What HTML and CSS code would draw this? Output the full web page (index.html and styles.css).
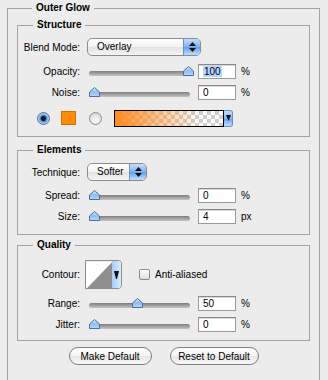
FILE: index.html
```html
<!DOCTYPE html>
<html lang="en">
<head>
  <meta charset="UTF-8" />
  <title>Outer Glow</title>
  <link rel="stylesheet" href="styles.css">
</head>
<body>
  <div class="box outer">
    <div class="title">Outer Glow</div>

    <div class="box structure">
      <div class="title">Structure</div>
      <div class="row first">
        <span class="lbl">Blend Mode:</span>
        <div class="popup blend">
          <span class="popup-text">Overlay</span>
          <span class="stepper"><svg width="7" height="10" viewBox="0 0 7 10"><path d="M3.5 0 L7 4 H0 Z M0 6 H7 L3.5 10 Z" fill="#111"/></svg></span>
        </div>
      </div>
      <div class="row gap8">
        <span class="lbl">Opacity:</span>
        <div class="slider"><div class="track"></div><svg class="knob" style="left:94px" width="11" height="10" viewBox="0 0 11 10"><path d="M0.5 5 L5.5 0.5 L10.5 5 V9.5 H0.5 Z" fill="url(#kg)" stroke="#4a6f9e"/></svg></div>
        <div class="num"><span class="sel">100</span></div>
        <span class="unit">%</span>
      </div>
      <div class="row">
        <span class="lbl">Noise:</span>
        <div class="slider"><div class="track"></div><svg class="knob" style="left:0px" width="11" height="10" viewBox="0 0 11 10"><path d="M0.5 5 L5.5 0.5 L10.5 5 V9.5 H0.5 Z" fill="url(#kg)" stroke="#4a6f9e"/></svg></div>
        <div class="num">0</div>
        <span class="unit">%</span>
      </div>
      <div class="colors">
        <span class="radio on"></span>
        <span class="chip"></span>
        <span class="radio off"></span>
        <div class="gradient">
          <div class="ramp"></div>
          <span class="drop"><svg width="5" height="6" viewBox="0 0 5 6"><path d="M0 0 H5 L2.5 6 Z" fill="#111"/></svg></span>
        </div>
      </div>
    </div>

    <div class="box elements">
      <div class="title">Elements</div>
      <div class="row first">
        <span class="lbl">Technique:</span>
        <div class="popup technique">
          <span class="popup-text">Softer</span>
          <span class="stepper"><svg width="7" height="10" viewBox="0 0 7 10"><path d="M3.5 0 L7 4 H0 Z M0 6 H7 L3.5 10 Z" fill="#111"/></svg></span>
        </div>
      </div>
      <div class="row gap7">
        <span class="lbl">Spread:</span>
        <div class="slider"><div class="track"></div><svg class="knob" style="left:0px" width="11" height="10" viewBox="0 0 11 10"><path d="M0.5 5 L5.5 0.5 L10.5 5 V9.5 H0.5 Z" fill="url(#kg)" stroke="#4a6f9e"/></svg></div>
        <div class="num">0</div>
        <span class="unit">%</span>
      </div>
      <div class="row">
        <span class="lbl">Size:</span>
        <div class="slider"><div class="track"></div><svg class="knob" style="left:0px" width="11" height="10" viewBox="0 0 11 10"><path d="M0.5 5 L5.5 0.5 L10.5 5 V9.5 H0.5 Z" fill="url(#kg)" stroke="#4a6f9e"/></svg></div>
        <div class="num">4</div>
        <span class="unit">px</span>
      </div>
    </div>

    <div class="box quality">
      <div class="title">Quality</div>
      <div class="row first contour-row">
        <span class="lbl">Contour:</span>
        <div class="contour">
          <svg width="28" height="29" viewBox="0 0 28 29"><rect width="28" height="29" fill="#fff"/><path d="M0 29 L28 0 V29 Z" fill="#8f8f8f"/></svg>
          <span class="cdrop"><svg width="5" height="8" viewBox="0 0 5 8"><path d="M0 0 H5 L3 8 H2 Z" fill="#111"/></svg></span>
        </div>
        <span class="check"></span>
        <span class="check-text">Anti-aliased</span>
      </div>
      <div class="row gap7">
        <span class="lbl">Range:</span>
        <div class="slider"><div class="track"></div><svg class="knob" style="left:43px" width="11" height="10" viewBox="0 0 11 10"><path d="M0.5 5 L5.5 0.5 L10.5 5 V9.5 H0.5 Z" fill="url(#kg)" stroke="#4a6f9e"/></svg></div>
        <div class="num">50</div>
        <span class="unit">%</span>
      </div>
      <div class="row">
        <span class="lbl">Jitter:</span>
        <div class="slider"><div class="track"></div><svg class="knob" style="left:0px" width="11" height="10" viewBox="0 0 11 10"><path d="M0.5 5 L5.5 0.5 L10.5 5 V9.5 H0.5 Z" fill="url(#kg)" stroke="#4a6f9e"/></svg></div>
        <div class="num">0</div>
        <span class="unit">%</span>
      </div>
    </div>

    <div class="buttons">
      <button class="make">Make Default</button>
      <button class="reset">Reset to Default</button>
    </div>
  </div>

  <svg width="0" height="0" class="defs">
    <defs>
      <linearGradient id="kg" x1="0" y1="0" x2="0" y2="1">
        <stop offset="0" stop-color="#dbeaff"/>
        <stop offset="0.5" stop-color="#8fbcf0"/>
        <stop offset="1" stop-color="#b9d8ff"/>
      </linearGradient>
    </defs>
  </svg>
</body>
</html>
```

FILE: styles.css
```css
* {
  box-sizing: border-box;
}
html, body {
  margin: 0;
  overflow: hidden;
}
body {
  background: #ececec;
  font-family: 'Liberation Sans', Arial, sans-serif;
  font-size: 10px;
  color: #000;
  width: 328px;
  height: 380px;
}
.defs {
  position: absolute;
}
.box {
  border: 1px solid #a3a3a3;
}
.title {
  width: max-content;
  margin: -8px 0 0 15px;
  padding: 0 4px;
  background: #ececec;
  font-weight: bold;
  font-size: 10px;
  line-height: 14px;
}
.outer {
  margin: 8px 0 0 7px;
  width: 313px;
  padding: 0 9px 40px 9px;
}
.structure {
  margin-top: 10px;
  padding-bottom: 10px;
}
.elements {
  margin-top: 13px;
  padding-bottom: 10px;
}
.quality {
  margin-top: 10px;
  padding-bottom: 8px;
}
.row {
  display: flex;
  align-items: center;
  height: 15px;
  margin-top: 6px;
}
.row.first {
  height: 18px;
}
.row.gap8 {
  margin-top: 8px;
}
.row.gap7 {
  margin-top: 7px;
}
.quality .row.first {
  margin-top: 8px;
}
.lbl {
  width: 62px;
  text-align: right;
  margin-right: 7px;
  flex: none;
}
.popup {
  display: flex;
  height: 18px;
  border: 1px solid #8c8c8c;
  border-radius: 5px;
  background: linear-gradient(#ffffff, #f1f1f1 50%, #e2e2e2 51%, #f4f4f4);
  overflow: hidden;
}
.popup.blend {
  width: 114px;
}
.popup.technique {
  width: 60px;
}
.popup-text {
  flex: 1;
  padding-left: 9px;
  line-height: 16px;
}
.stepper {
  width: 17px;
  display: flex;
  align-items: center;
  justify-content: center;
  border-left: 1px solid #6f8fba;
  background: linear-gradient(#c4def9, #7fb2ee 50%, #5e9ded 51%, #bfe1ff);
}
.slider {
  position: relative;
  width: 101px;
  height: 15px;
  margin-left: 2px;
  margin-right: 8px;
  flex: none;
}
.track {
  position: absolute;
  left: 0;
  right: 0;
  top: 7px;
  height: 5px;
  border-radius: 3px;
  background: linear-gradient(#7d7d7d, #a9a9a9 60%, #c2c2c2);
}
.knob {
  position: absolute;
  top: 2px;
}
.num {
  width: 38px;
  height: 15px;
  border: 1px solid #999;
  border-top-color: #888;
  background: #fff;
  padding-left: 4px;
  line-height: 13px;
  box-shadow: inset 0 1px 0 #d8d8d8;
}
.sel {
  background: #b5d5ff;
  padding: 0 1px;
}
.unit {
  margin-left: 5px;
}
.colors {
  display: flex;
  align-items: center;
  height: 16px;
  margin-top: 10px;
  padding-left: 19px;
}
.radio {
  width: 13px;
  height: 13px;
  border-radius: 50%;
  border: 1px solid #8a8a8a;
  background: radial-gradient(circle at 50% 70%, #ffffff, #dcdcdc 70%, #bcbcbc);
  flex: none;
}
.radio.on {
  border-color: #4f73a6;
  background: radial-gradient(circle, #111 0 2px, #2d5b9a 2.5px, #7fb2ee 4px, #bcdcff 6px);
}
.radio.off {
  margin-left: 13px;
}
.chip {
  width: 15px;
  height: 14px;
  margin-left: 11px;
  background: #ff8a0a;
  border: 1px solid #d77000;
}
.gradient {
  display: flex;
  margin-left: 12px;
  height: 17px;
}
.ramp {
  width: 110px;
  border: 1px solid #000;
  background:
    linear-gradient(to right, #ff8a1e, rgba(255, 138, 30, 0.55) 35%, rgba(255, 138, 30, 0) 80%),
    repeating-conic-gradient(#cfcfcf 0 25%, #ffffff 0 50%) 0 0 / 8px 8px;
}
.drop {
  width: 9px;
  border: 1px solid #6f8fba;
  border-left: none;
  border-radius: 0 3px 3px 0;
  display: flex;
  align-items: center;
  justify-content: center;
  background: linear-gradient(#c4def9, #7fb2ee 50%, #5e9ded 51%, #bfe1ff);
}
.contour-row.first {
  height: 29px;
}
.contour {
  display: flex;
  width: 37px;
  height: 29px;
  border: 1px solid #8c8c8c;
  border-radius: 0 4px 4px 0;
  overflow: hidden;
  margin-left: -2px;
}
.contour svg {
  display: block;
}
.cdrop {
  width: 9px;
  display: flex;
  align-items: center;
  justify-content: center;
  background: linear-gradient(to right, #a9ccf5, #dcecff);
}
.check {
  width: 11px;
  height: 11px;
  border: 1px solid #8a8a8a;
  border-radius: 2px;
  background: linear-gradient(#fff, #dedede);
  margin-left: 17px;
}
.check-text {
  margin-left: 5px;
}
.buttons {
  display: flex;
  justify-content: center;
  gap: 18px;
  margin-top: 6px;
}
.buttons button {
  font-family: 'Liberation Sans', Arial, sans-serif;
  font-size: 10px;
  height: 18px;
  padding: 0;
  white-space: nowrap;
  border: 1px solid #7e7e7e;
  border-radius: 9px;
  background: linear-gradient(#ffffff, #f3f3f3 50%, #e6e6e6 51%, #f8f8f8);
  color: #000;
}
.make {
  width: 83px;
}
.reset {
  width: 89px;
}
```
